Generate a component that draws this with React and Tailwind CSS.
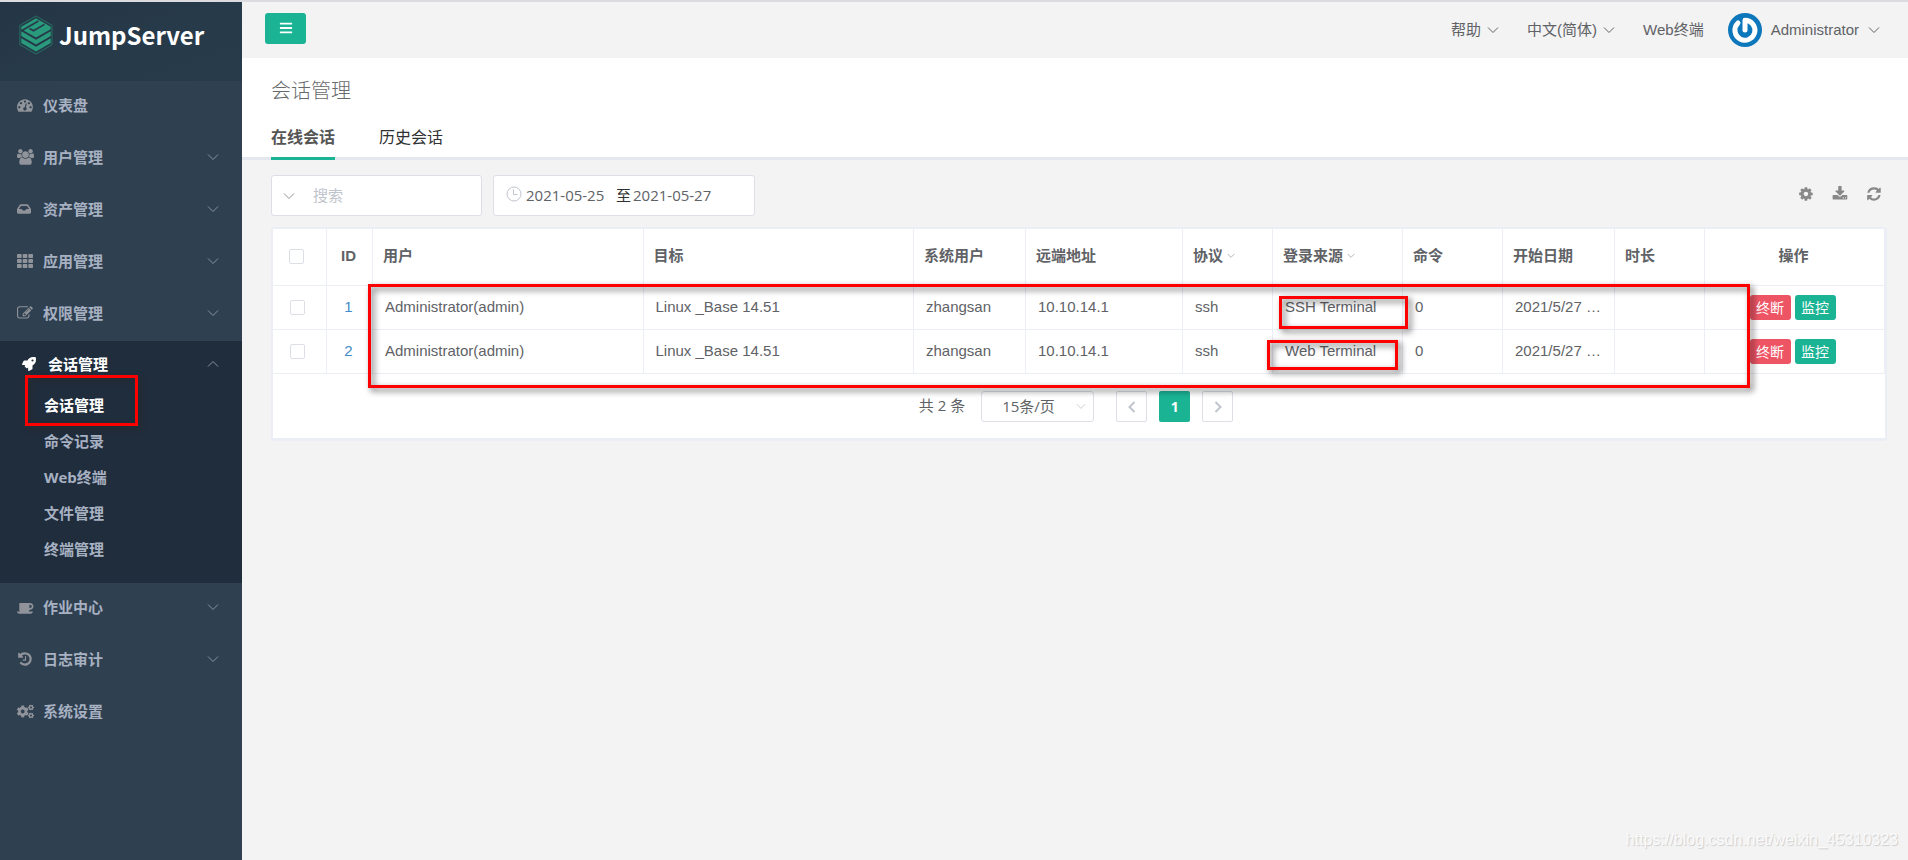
import React, { useState } from 'react';
import { FaInbox, FaTh, FaRocket, FaCogs, FaBars } from 'react-icons/fa';

const PATHS = {
  dashboard:
    'M384 1152q0-53-37.5-90.5t-90.5-37.5-90.5 37.5-37.5 90.5 37.5 90.5 90.5 37.5 90.5-37.5 37.5-90.5zm192-448q0-53-37.5-90.5t-90.5-37.5-90.5 37.5-37.5 90.5 37.5 90.5 90.5 37.5 90.5-37.5 37.5-90.5zm428 481l101-382q6-26-7.5-48.5t-38.5-29.5-48 6.5-30 39.5l-101 382q-60 5-107 43.5t-63 98.5q-20 77 20 146t117 89 146-20 89-117q16-60-6-117t-72-91zm660-33q0-53-37.5-90.5t-90.5-37.5-90.5 37.5-37.5 90.5 37.5 90.5 90.5 37.5 90.5-37.5 37.5-90.5zm-640-640q0-53-37.5-90.5t-90.5-37.5-90.5 37.5-37.5 90.5 37.5 90.5 90.5 37.5 90.5-37.5 37.5-90.5zm448 192q0-53-37.5-90.5t-90.5-37.5-90.5 37.5-37.5 90.5 37.5 90.5 90.5 37.5 90.5-37.5 37.5-90.5zm320 448q0 261-141 483-19 29-54 29h-1402q-35 0-54-29-141-221-141-483 0-182 71-348t191-286 286-191 348-71 348 71 286 191 191 286 71 348z',
  users:
    'M593 896q-162 5-265 128h-134q-82 0-138-40.5t-56-118.5q0-353 124-353 6 0 43.5 21t97.5 42.5 119 21.5q67 0 133-23-5 37-5 66 0 159 93 287zm1071 637q0 120-73 189.5t-194 69.5h-874q-121 0-194-69.5t-73-189.5q0-53 3.5-103.5t14-109 26.5-108.5 43-97.5 62-81 85.5-53.5 111.5-20q10 0 43 21.5t73 48 107 48 135 21.5 135-21.5 107-48 73-48 43-21.5q61 0 111.5 20t85.5 53.5 62 81 43 97.5 26.5 108.5 14 109 3.5 103.5zm-1024-1277q0 106-75 181t-181 75-181-75-75-181 75-181 181-75 181 75 75 181zm704 384q0 159-112.5 271.5t-271.5 112.5-271.5-112.5-112.5-271.5 112.5-271.5 271.5-112.5 271.5 112.5 112.5 271.5zm576 225q0 78-56 118.5t-138 40.5h-134q-103-123-265-128 93-128 93-287 0-29-5-66 66 23 133 23 59 0 119-21.5t97.5-42.5 43.5-21q124 0 124 353zm-128-609q0 106-75 181t-181 75-181-75-75-181 75-181 181-75 181 75 75 181z',
  edit:
    'M888 1184l116-116-152-152-116 116v56h96v96h56zm440-720q-16-16-33 1l-350 350q-17 17-1 33t33-1l350-350q17-17 1-33zm80 594v190q0 119-84.5 203.5t-203.5 84.5h-832q-119 0-203.5-84.5t-84.5-203.5v-832q0-119 84.5-203.5t203.5-84.5h832q63 0 117 25 15 7 18 23 3 17-9 29l-49 49q-14 14-32 8-23-6-45-6h-832q-66 0-113 47t-47 113v832q0 66 47 113t113 47h832q66 0 113-47t47-113v-126q0-13 9-22l64-64q15-15 35-7t20 29zm-96-738l288 288-672 672h-288v-288zm444 132l-92 92-288-288 92-92q28-28 68-28t68 28l152 152q28 28 28 68t-28 68z',
  history:
    'M1664 896q0 156-61 298t-164 245-245 164-298 61q-172 0-327-72.5t-264-204.5q-7-10-6.5-22.5t8.5-20.5l137-138q10-9 25-9 16 2 23 12 73 95 179 147t225 52q104 0 198.5-40.5t163.5-109.5 109.5-163.5 40.5-198.5-40.5-198.5-109.5-163.5-163.5-109.5-198.5-40.5q-98 0-188 35.5t-160 101.5l137 138q31 30 14 69-17 40-59 40h-448q-26 0-45-19t-19-45v-448q0-42 40-59 39-17 69 14l130 129q107-101 244.5-156.5t284.5-55.5q156 0 298 61t245 164 164 245 61 298zm-640-288v448q0 14-9 23t-23 9h-320q-14 0-23-9t-9-23v-64q0-14 9-23t23-9h224v-352q0-14 9-23t23-9h64q14 0 23 9t9 23z',
  coffee:
    'M1664 832q0-80-56-136t-136-56h-64v384h64q80 0 136-56t56-136zm-1664 576h1792q0 106-75 181t-181 75h-1280q-106 0-181-75t-75-181zm1856-576q0 159-112.5 271.5t-271.5 112.5h-64v32q0 92-66 158t-158 66h-704q-92 0-158-66t-66-158v-736q0-26 19-45t45-19h1152q159 0 271.5 112.5t112.5 271.5z',
  refresh:
    'M1639 1056q0 5-1 7-64 268-268 434.5t-478 166.5q-146 0-282.5-55t-243.5-157l-129 129q-19 19-45 19t-45-19-19-45v-448q0-26 19-45t45-19h448q26 0 45 19t19 45-19 45l-137 137q71 66 161 102t187 36q134 0 250-65t186-179q11-17 53-117 8-23 30-23h192q13 0 22.5 9.5t9.5 22.5zm25-800v448q0 26-19 45t-45 19h-448q-26 0-45-19t-19-45 19-45l138-138q-148-137-349-137-134 0-250 65t-186 179q-11 17-53 117-8 23-30 23h-199q-13 0-22.5-9.5t-9.5-22.5v-7q65-268 270-434.5t480-166.5q146 0 284 55.5t245 156.5l130-129q19-19 45-19t45 19 19 45z',
  download:
    'M1344 1344q0-26-19-45t-45-19-45 19-19 45 19 45 45 19 45-19 19-45zm256 0q0-26-19-45t-45-19-45 19-19 45 19 45 45 19 45-19 19-45zm128-224v320q0 40-28 68t-68 28h-1472q-40 0-68-28t-28-68v-320q0-40 28-68t68-28h465l135 136q58 56 136 56t136-56l136-136h464q40 0 68 28t28 68zm-325-569q17 41-14 70l-448 448q-18 19-45 19t-45-19l-448-448q-31-29-14-70 17-39 59-39h256v-448q0-26 19-45t45-19h256q26 0 45 19t19 45v448h256q42 0 59 39z',
  gear:
    'M1152 896q0-106-75-181t-181-75-181 75-75 181 75 181 181 75 181-75 75-181zm512-109v222q0 12-8 23t-20 13l-185 28q-19 54-39 91 35 50 107 138 10 12 10 25t-9 23q-27 37-99 108t-94 71q-12 0-26-9l-138-108q-44 23-91 38-16 136-29 186-7 28-36 28h-222q-14 0-24.5-8.5t-11.5-21.5l-28-184q-49-16-90-37l-141 107q-10 9-25 9-14 0-25-11-126-114-165-168-7-10-7-23 0-12 8-23 15-21 51-66.5t54-70.5q-27-50-41-99l-183-27q-13-2-21-12.5t-8-23.5v-222q0-12 8-23t19-13l186-28q14-46 39-92-40-57-107-138-10-12-10-24 0-10 9-23 26-36 98.5-107.5t94.5-71.5q13 0 26 10l138 107q44-23 91-38 16-136 29-186 7-28 36-28h222q14 0 24.5 8.5t11.5 21.5l28 184q49 16 90 37l142-107q9-9 24-9 13 0 25 10 129 119 165 170 7 8 7 22 0 12-8 23-15 21-51 66.5t-54 70.5q26 50 41 98l183 28q13 2 21 12.5t8 23.5z',
};

function Glyph({ name }) {
  return (
    <svg viewBox="0 0 1920 1792" className="w-[17px]" fill="currentColor" aria-hidden="true">
      <path d={PATHS[name]} />
    </svg>
  );
}

function Chevron({ className = 'w-3', up = false }) {
  return (
    <svg viewBox="0 0 12 8" className={className} fill="none" stroke="currentColor" strokeWidth="1" aria-hidden="true">
      <path d={up ? 'M1 6.5 6 1.5l5 5' : 'M1 1.5l5 5 5-5'} />
    </svg>
  );
}

function Logo() {
  return (
    <svg viewBox="0 0 34 40" className="w-[34px] h-10 shrink-0" aria-hidden="true">
      <path d="M17 1 33 10.3v19.4L17 39 .9 29.700V10.300z" fill="none" stroke="#277163" strokeWidth="1" />
      <g fill="#2a9a7c">
        <path d="M2.300 11.800 17 3.300l14.700 8.500v2.400L17 22.600 2.300 14.200z" />
        <path d="M2.300 16.300 17 24.800l14.700-8.500v4.700L17 29.500 2.300 21z" />
        <path d="M2.300 23.200 17 31.700l14.700-8.500v4.700L17 36.500 2.300 27.900z" />
      </g>
      <path d="M3 15.500 19.500 6M10.500 13.500l4 2.300 11-6.400" stroke="#26394a" strokeWidth="1.600" fill="none" />
    </svg>
  );
}

function Avatar() {
  return (
    <svg viewBox="0 0 34 34" className="w-[34px] h-[34px]" role="img" aria-label="Administrator avatar">
      <circle cx="17" cy="17" r="17" fill="#0c77bb" />
      <path d="M10 10A10 10 0 1 0 17 7.200V17" fill="none" stroke="#fff" strokeWidth="5" strokeLinecap="round" strokeLinejoin="round" />
    </svg>
  );
}

const menuTop = [
  { label: '仪表盘', icon: <Glyph name="dashboard" /> },
  { label: '用户管理', icon: <Glyph name="users" />, expand: true },
  { label: '资产管理', icon: <FaInbox className="w-[14px] h-[14px]" />, expand: true },
  { label: '应用管理', icon: <FaTh className="w-4 h-4" />, expand: true },
  { label: '权限管理', icon: <Glyph name="edit" />, expand: true },
];

const menuBottom = [
  { label: '作业中心', icon: <Glyph name="coffee" />, expand: true },
  { label: '日志审计', icon: <Glyph name="history" />, expand: true },
  { label: '系统设置', icon: <FaCogs className="w-[17px] h-[17px]" /> },
];

const subMenu = ['会话管理', '命令记录', 'Web终端', '文件管理', '终端管理'];

const sessions = [
  { id: 1, user: 'Administrator(admin)', asset: 'Linux _Base 14.51', systemUser: 'zhangsan', remote: '10.10.14.1', protocol: 'ssh', from: 'SSH Terminal', commands: 0, start: '2021/5/27 …' },
  { id: 2, user: 'Administrator(admin)', asset: 'Linux _Base 14.51', systemUser: 'zhangsan', remote: '10.10.14.1', protocol: 'ssh', from: 'Web Terminal', commands: 0, start: '2021/5/27 …' },
];

function MenuItem({ item }) {
  return (
    <a href="#" className="flex items-center h-13 pb-1 pl-[17px] pr-[23px]">
      <span className="w-[26px] text-[#909399]">{item.icon}</span>
      <span className="flex-1">{item.label}</span>
      {item.expand && <Chevron className="w-3 text-[#8a93a0]" />}
    </a>
  );
}

function Sidebar() {
  return (
    <aside className="w-[242px] shrink-0 bg-[#2f4050] text-[#a7b1c2] text-[15px] font-bold font-['Open_Sans','Noto_Sans_CJK_SC',sans-serif]">
      <div className="h-[79px] pt-[13px] pl-[19px] bg-linear-to-br from-[#243646] via-[#273a4a] to-[#283b4b]">
        <a href="#" className="flex items-center gap-[6px]">
          <Logo />
          <span className="text-white text-[24px] leading-10 font-['Noto_Sans_CJK_SC',sans-serif]">JumpServer</span>
        </a>
      </div>
      <nav>
        {menuTop.map((item) => <MenuItem key={item.label} item={item} />)}
        <div className="bg-[#202d3c] pb-4">
          <a href="#" className="flex items-center h-[46px] pl-[22px] pr-[23px] text-white">
            <span className="w-[26px]"><FaRocket className="w-[14px] h-[14px]" /></span>
            <span className="flex-1">会话管理</span>
            <Chevron up className="w-3 text-[#8a93a0]" />
          </a>
          <ul>
            {subMenu.map((label, i) => (
              <li key={label} className="relative">
                <a href="#" className={`flex items-center h-9 pl-11 ${i === 0 ? 'text-white' : ''}`}>{label}</a>
                {i === 0 && (
                  <div className="absolute left-[25px] -top-3 w-[113px] h-[51px] border-3 border-[#f00] drop-shadow-[3px_3px_3px_rgba(40,40,40,0.7)] pointer-events-none" />
                )}
              </li>
            ))}
          </ul>
        </div>
        {menuBottom.map((item) => <MenuItem key={item.label} item={item} />)}
      </nav>
    </aside>
  );
}

function TopBar() {
  return (
    <header className="flex items-center justify-between h-14 pl-[23px] pr-7 text-[#606266] text-[15px]">
      <button type="button" aria-label="菜单" className="flex items-center justify-center w-[41px] h-[31px] mb-1 rounded-[3px] bg-[#1ab394] text-white">
        <FaBars className="w-[14px] h-[14px]" />
      </button>
      <div className="flex items-center">
        <button type="button" className="flex items-center gap-[6px] mr-7">帮助<Chevron /></button>
        <button type="button" className="flex items-center gap-[6px] mr-7">中文(简体)<Chevron /></button>
        <a href="#" className="mr-6">Web终端</a>
        <button type="button" className="flex items-center gap-[9px]">
          <Avatar />
          Administrator
          <Chevron />
        </button>
      </div>
    </header>
  );
}

function Heading({ tab, setTab }) {
  const tabs = ['在线会话', '历史会话'];
  return (
    <div className="bg-white border-b-3 border-[#e4e7ed] pl-[29px] pt-[19px]">
      <h1 className="text-[20px] leading-7 font-light text-[#676a6c]">会话管理</h1>
      <div className="flex gap-11 mt-[14px]">
        {tabs.map((name) => (
          <button
            key={name}
            type="button"
            onClick={() => setTab(name)}
            className={`h-[41px] -mb-[3px] border-b-3 text-base ${tab === name ? 'border-[#1ab394] font-bold text-[#555]' : 'border-transparent text-[#303133]'}`}
          >
            {name}
          </button>
        ))}
      </div>
    </div>
  );
}

function Toolbar() {
  return (
    <div className="flex items-center text-[15px] font-['Open_Sans','Noto_Sans_CJK_SC',sans-serif]">
      <div className="flex items-center w-[211px] h-[41px] pl-[11px] bg-white border border-[#dcdfe6] rounded-[3px]">
        <Chevron className="w-3 shrink-0 text-[#909399]" />
        <input type="text" aria-label="搜索" placeholder="搜索" className="min-w-0 flex-1 ml-[18px] outline-none placeholder:text-[#c0c4cc]" />
      </div>
      <div className="flex items-center w-[262px] h-[41px] ml-[11px] pl-3 bg-white border border-[#dcdfe6] rounded-[3px] text-[#606266]">
        <svg viewBox="0 0 16 16" className="w-4 h-4 mb-1 mr-1 shrink-0" fill="none" stroke="#c0c4cc" aria-hidden="true">
          <circle cx="8" cy="8" r="7" />
          <path d="M7.500 3.500v5h4" />
        </svg>
        <input type="text" aria-label="开始日期" defaultValue="2021-05-25" className="w-[90px] outline-none" />
        <span className="w-[17px] text-[#303133]">至</span>
        <input type="text" aria-label="结束日期" defaultValue="2021-05-27" className="w-[91px] outline-none" />
      </div>
      <div className="flex gap-[17px] ml-auto mr-1 mb-1 text-[#888]">
        <button type="button" aria-label="设置"><Glyph name="gear" /></button>
        <button type="button" aria-label="下载"><Glyph name="download" /></button>
        <button type="button" aria-label="刷新"><Glyph name="refresh" /></button>
      </div>
    </div>
  );
}

function Check({ label }) {
  return (
    <input
      type="checkbox"
      aria-label={label}
      className="block mx-auto w-[15px] h-[15px] appearance-none bg-white border border-[#dcdfe6] rounded-[2px] checked:bg-[#1ab394]"
    />
  );
}

function SessionTable() {
  const th = 'border-r border-b border-[#ebeef5] pl-[10px] pb-[2px] text-left font-bold';
  const td = 'border-r border-b border-[#ebeef5] pl-3 whitespace-nowrap';
  return (
    <table className="w-full table-fixed border-separate border-spacing-0 text-[15px] text-[#606266]">
      <colgroup>
        <col className="w-[54px]" />
        <col className="w-[46px]" />
        <col />
        <col />
        <col className="w-[112px]" />
        <col className="w-[157px]" />
        <col className="w-[90px]" />
        <col className="w-[130px]" />
        <col className="w-[100px]" />
        <col className="w-[112px]" />
        <col className="w-[90px]" />
        <col className="w-[180px]" />
      </colgroup>
      <thead>
        <tr className="h-[57px]">
          <th className="border-r border-b border-[#ebeef5] pr-[6px] pb-[2px]"><Check label="全选" /></th>
          <th className="border-r border-b border-[#ebeef5] pr-[2px] pb-[2px] font-bold">ID</th>
          <th className={th}>用户</th>
          <th className={th}>目标</th>
          <th className={th}>系统用户</th>
          <th className={th}>远端地址</th>
          <th className={th}><span className="inline-flex items-center gap-1">协议<Chevron className="w-2 text-[#909399]" /></span></th>
          <th className={th}><span className="inline-flex items-center gap-1">登录来源<Chevron className="w-2 text-[#909399]" /></span></th>
          <th className={th}>命令</th>
          <th className={th}>开始日期</th>
          <th className={th}>时长</th>
          <th className="border-r border-b border-[#ebeef5] pr-[2px] pb-[2px] font-bold">操作</th>
        </tr>
      </thead>
      <tbody>
        {sessions.map((s) => (
          <tr key={s.id} className="h-11">
            <td className="border-r border-b border-[#ebeef5] pr-[5px]"><Check label={`选择 ${s.id}`} /></td>
            <td className="border-r border-b border-[#ebeef5] pr-[2px] text-center"><a href="#" className="text-[#428bca]">{s.id}</a></td>
            <td className={td}>{s.user}</td>
            <td className={td}>{s.asset}</td>
            <td className={td}>{s.systemUser}</td>
            <td className={td}>{s.remote}</td>
            <td className={td}>{s.protocol}</td>
            <td className={td}>{s.from}</td>
            <td className={td}>{s.commands}</td>
            <td className={td}>{s.start}</td>
            <td className={td}></td>
            <td className="border-r border-b border-[#ebeef5]">
              <div className="flex justify-center gap-1 pr-1 text-sm text-white">
                <button type="button" className="w-[41px] h-[25px] rounded-[3px] bg-[#ed5565]">终断</button>
                <button type="button" className="w-[41px] h-[25px] rounded-[3px] bg-[#1ab394]">监控</button>
              </div>
            </td>
          </tr>
        ))}
      </tbody>
    </table>
  );
}

function Pagination() {
  const pager = 'flex items-center justify-center w-[31px] h-[31px] ml-3 rounded-[2px]';
  return (
    <div className="flex items-center justify-center pt-[17px] pb-4 pr-[6px] text-[15px] text-[#606266] font-['Open_Sans','Noto_Sans_CJK_SC',sans-serif]">
      <span className="pb-[2px]">共 2 条</span>
      <div className="relative ml-4 mr-[10px]">
        <select aria-label="每页条数" className="block w-[113px] h-[31px] pl-5 appearance-none bg-white border border-[#dcdfe6] rounded-[3px]">
          <option>15条/页</option>
          <option>30条/页</option>
          <option>50条/页</option>
        </select>
        <Chevron className="absolute right-2 top-3 w-[10px] text-[#c0c4cc]" />
      </div>
      <button type="button" aria-label="上一页" className={`${pager} border border-[#dcdfe6]`}>
        <svg viewBox="0 0 8 12" className="w-2" fill="none" stroke="#c0c4cc" strokeWidth="2"><path d="M6.500 1 1.500 6l5 5" /></svg>
      </button>
      <button type="button" className={`${pager} bg-[#1ab394] text-white text-sm font-bold`}>1</button>
      <button type="button" aria-label="下一页" className={`${pager} border border-[#dcdfe6]`}>
        <svg viewBox="0 0 8 12" className="w-2" fill="none" stroke="#c0c4cc" strokeWidth="2"><path d="M1.500 1l5 5-5 5" /></svg>
      </button>
    </div>
  );
}

export default function App() {
  const [tab, setTab] = useState('在线会话');

  return (
    <div className="relative flex min-h-screen border-t-2 border-[#dcdce0] bg-[#f3f3f4] font-['Liberation_Sans','Noto_Sans_CJK_SC',sans-serif]">
      <Sidebar />
      <main className="flex-1 min-w-0">
        <TopBar />
        <Heading tab={tab} setTab={setTab} />
        <div className="pl-[29px] pr-[21px] pt-[15px]">
          <Toolbar />
          <section className="relative mt-[11px] bg-white border-2 border-b-3 border-[#ebeef5] rounded-[3px]">
            <SessionTable />
            <Pagination />
            {/* highlight frames */}
            <div className="absolute left-[95px] right-[135px] top-[55px] h-[104px] border-3 border-[#f00] drop-shadow-[3px_3px_3px_rgba(0,0,0,0.6)] pointer-events-none" />
            <div className="absolute right-[477px] top-[67px] w-[129px] h-[33px] border-3 border-[#f00] drop-shadow-[3px_3px_3px_rgba(0,0,0,0.6)] pointer-events-none" />
            <div className="absolute right-[487px] top-[111px] w-[131px] h-[30px] border-3 border-[#f00] drop-shadow-[3px_3px_3px_rgba(0,0,0,0.6)] pointer-events-none" />
          </section>
        </div>
      </main>
      <div className="absolute right-[10px] bottom-2 text-base text-[#fafafa] [text-shadow:1px_1px_1px_#ccc]">
        https://blog.csdn.net/weixin_45310323
      </div>
    </div>
  );
}
